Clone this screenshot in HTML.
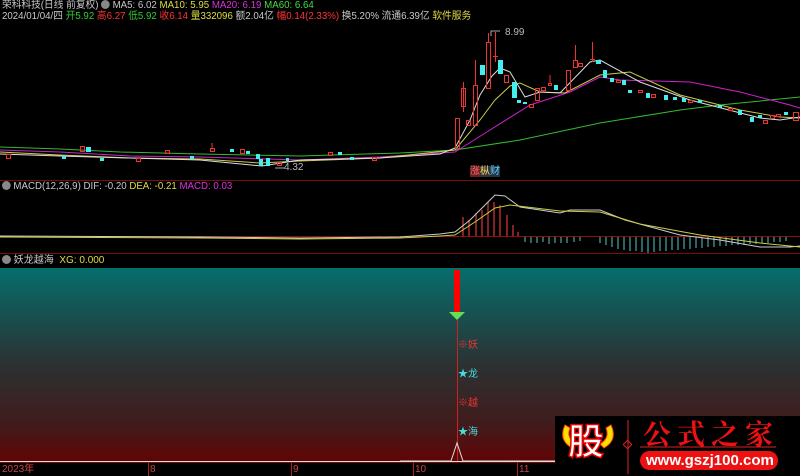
<!DOCTYPE html>
<html><head><meta charset="utf-8"><style>
body{margin:0;width:800px;height:476px;overflow:hidden;background:#000;font-family:"Liberation Sans","Noto Sans CJK SC",sans-serif;position:relative}
.t{position:absolute;font-size:10px;white-space:nowrap;color:#c8c8c8;line-height:12px}
.h{transform:scaleX(0.97);transform-origin:0 0}
.g{color:#3c3}.r{color:#f33}.y{color:#dd4}.m{color:#d3d}.gr{color:#4d4}
</style></head><body>
<svg width="800" height="476" style="position:absolute;left:0;top:0">
<defs><linearGradient id="bg" x1="0" y1="0" x2="0" y2="1">
<stop offset="0" stop-color="#056e6c"/><stop offset="0.5" stop-color="#2c3132"/><stop offset="0.8" stop-color="#401c1c"/><stop offset="1" stop-color="#620404"/></linearGradient></defs>
<line x1="0" y1="180.5" x2="800" y2="180.5" stroke="#7a0c0c"/>
<line x1="0" y1="253.5" x2="800" y2="253.5" stroke="#7a0c0c"/>
<rect x="0" y="268" width="800" height="194" fill="url(#bg)"/>
<line x1="0" y1="461.5" x2="800" y2="461.5" stroke="#ddd"/>
<line x1="0" y1="462.5" x2="800" y2="462.5" stroke="#7a0c0c"/>
<polyline fill="none" stroke="#3b3" stroke-width="1" points="0,147 60,149 120,152 200,154 300,156 400,153 455,150 520,140 600,123 680,110 720,105 800,97"/>
<polyline fill="none" stroke="#c2c" stroke-width="1" points="0,150 60,152 130,156 200,157 300,160 380,157 455,152 490,130 530,105 570,92 600,77 620,80 690,82 740,92 790,105 800,108"/>
<polyline fill="none" stroke="#cc4" stroke-width="1" points="0,152 60,155 130,158 200,159 260,163 300,161 380,158 455,150 480,120 495,100 510,86 520,83 540,92 565,93 600,75 630,72 680,95 740,110 780,117 800,118"/>
<polyline fill="none" stroke="#ddd" stroke-width="1" points="0,154 60,156 130,158 200,160 262,166 300,160 380,158 440,154 455,148 470,120 480,95 492,76 500,68 510,72 525,97 540,92 560,93 590,62 600,60 640,82 690,100 760,118 780,120 800,117"/>
<g stroke="#e33" fill="none">
<rect x="455.5" y="118.5" width="4" height="30"/><rect x="461.5" y="88.5" width="4" height="18"/><line x1="463.5" y1="82" x2="463.5" y2="112"/>
<rect x="466.5" y="120.5" width="4" height="5"/><rect x="473.5" y="85.5" width="4" height="40"/><line x1="475.5" y1="60" x2="475.5" y2="85"/>
<rect x="486.5" y="42.5" width="4" height="46"/><line x1="488.5" y1="33" x2="488.5" y2="42"/>
<line x1="495.5" y1="32" x2="495.5" y2="62"/><line x1="493" y1="56.5" x2="498" y2="56.5"/>
<rect x="504.5" y="75.5" width="4" height="7"/><rect x="529.5" y="104.5" width="4" height="3"/>
<rect x="535.5" y="88.5" width="4" height="12"/><rect x="541.5" y="87.5" width="4" height="3"/><rect x="548.5" y="83.5" width="3" height="2"/><line x1="550" y1="75" x2="550" y2="83"/>
<rect x="566.5" y="70.5" width="4" height="20"/><rect x="573.5" y="60.5" width="4" height="7"/><line x1="575.5" y1="45" x2="575.5" y2="60"/>
<rect x="578.5" y="63.5" width="4" height="3"/><line x1="592.5" y1="42" x2="592.5" y2="62"/><line x1="590" y1="59.5" x2="595" y2="59.5"/>
<rect x="616.5" y="80.5" width="4" height="2"/><rect x="638.5" y="90.5" width="4" height="2"/><rect x="651.5" y="94.5" width="4" height="3"/>
<rect x="688.5" y="100.5" width="4" height="2"/><rect x="728.5" y="108.5" width="4" height="2"/><rect x="763.5" y="120.5" width="4" height="3"/>
<rect x="770.5" y="115.5" width="4" height="3"/><rect x="776.5" y="114.5" width="4" height="2"/><rect x="793.5" y="112.5" width="5" height="8"/>
<rect x="80.5" y="146.5" width="4" height="5"/><rect x="6.5" y="154.5" width="4" height="4"/><rect x="136.5" y="158.5" width="4" height="3"/>
<rect x="165.5" y="150.5" width="4" height="3"/><rect x="210.5" y="148.5" width="4" height="3"/><line x1="212" y1="143" x2="212" y2="149"/>
<rect x="240.5" y="149.5" width="4" height="4"/><rect x="277.5" y="162.5" width="4" height="3"/><rect x="328.5" y="152.5" width="4" height="3"/><rect x="372.5" y="157.5" width="4" height="3"/>
</g>
<g fill="#4ee">
<rect x="480" y="65" width="5" height="10"/><rect x="498" y="60" width="5" height="14"/><rect x="512" y="82" width="5" height="16"/>
<rect x="517" y="100" width="4" height="3"/><rect x="523" y="102" width="4" height="2"/><rect x="554" y="85" width="4" height="5"/>
<rect x="596" y="60" width="5" height="4"/><rect x="603" y="70" width="4" height="8"/><rect x="610" y="78" width="4" height="4"/>
<rect x="622" y="80" width="4" height="5"/><rect x="628" y="90" width="4" height="3"/><rect x="646" y="93" width="4" height="5"/>
<rect x="664" y="95" width="4" height="5"/><rect x="673" y="97" width="4" height="3"/><rect x="682" y="98" width="4" height="4"/>
<rect x="698" y="100" width="4" height="3"/><rect x="718" y="105" width="4" height="3"/><rect x="738" y="110" width="4" height="5"/>
<rect x="750" y="117" width="4" height="5"/><rect x="758" y="115" width="4" height="3"/><rect x="784" y="112" width="4" height="3"/>
<rect x="86" y="147" width="5" height="5"/><rect x="62" y="155" width="4" height="4"/><rect x="100" y="158" width="4" height="3"/>
<rect x="190" y="156" width="4" height="3"/><rect x="230" y="149" width="4" height="3"/><rect x="246" y="151" width="4" height="3"/>
<rect x="256" y="154" width="4" height="5"/><rect x="259" y="159" width="4" height="7"/><rect x="266" y="158" width="4" height="8"/>
<rect x="286" y="158" width="3" height="3"/><rect x="338" y="152" width="4" height="3"/><rect x="350" y="157" width="4" height="3"/>
</g>
<polyline fill="none" stroke="#aaa" points="491,36 491,31 500,31"/>
<polyline fill="none" stroke="#aaa" points="285,168 275,168"/>
<line x1="0" y1="236.5" x2="800" y2="236.5" stroke="#8a1010"/>
<g stroke="#c33" stroke-width="1.3">
<line x1="463" y1="236" x2="463" y2="217"/><line x1="469" y1="236" x2="469" y2="220"/><line x1="476" y1="236" x2="476" y2="213"/><line x1="482" y1="236" x2="482" y2="210"/><line x1="488" y1="236" x2="488" y2="202"/><line x1="494" y1="236" x2="494" y2="202"/><line x1="500" y1="236" x2="500" y2="205"/><line x1="507" y1="236" x2="507" y2="215"/><line x1="513" y1="236" x2="513" y2="225"/><line x1="518" y1="236" x2="518" y2="232"/>
</g>
<g stroke="#5cc" stroke-width="1">
<path d="M525 237v5M531 237v6M537 237v6M543 237v5M549 237v7M555 237v6M561 237v6M567 237v6M574 237v5M580 237v4M600 237v6M606 237v8M612 237v10M618 237v12M624 237v13M630 237v14M636 237v14M642 237v15M648 237v16M654 237v15M660 237v14M666 237v14M672 237v13M678 237v13M684 237v12M690 237v12M696 237v11M702 237v11M708 237v10M714 237v10M720 237v9M726 237v9M732 237v8M738 237v8M744 237v8M750 237v7M756 237v7M762 237v6M768 237v6M774 237v5M780 237v5M786 237v4"/>
</g>
<polyline fill="none" stroke="#ccc" points="0,236 200,237 300,238 400,237 440,234 455,232 470,220 485,205 495,195 505,196 520,207 560,213 570,210 600,210 625,220 680,235 720,240 760,247 790,247 800,246"/>
<polyline fill="none" stroke="#cc4" points="0,237 200,238 300,239 400,238 440,236 455,235 475,222 495,208 510,205 560,211 600,212 640,224 700,235 760,243 790,246 800,247"/>
<rect x="454" y="270" width="6" height="42" fill="#f00"/>
<polygon points="449,312 465,312 457,320" fill="#6d5"/>
<line x1="457.5" y1="320" x2="457.5" y2="461" stroke="#c22"/>
<polyline fill="none" stroke="#ddd" points="400,461 451,461 457,443 463,461 555,461"/>
<g stroke="#a22"><line x1="148.5" y1="463" x2="148.5" y2="476"/><line x1="291.5" y1="463" x2="291.5" y2="476"/><line x1="413.5" y1="463" x2="413.5" y2="476"/><line x1="517.5" y1="463" x2="517.5" y2="476"/></g>
<rect x="555" y="416" width="245" height="60" fill="#000"/>
<path d="M565 425 Q558 440 572 448 L576 444 Q566 438 570 428Z" fill="#fd0" stroke="#f40"/>
<path d="M611 425 Q618 440 604 448 L600 444 Q610 438 606 428Z" fill="#fd0" stroke="#f40"/>
<line x1="628" y1="420" x2="628" y2="474" stroke="#d22"/>
<rect x="624.5" y="441.5" width="6" height="6" fill="none" stroke="#d22" transform="rotate(45 627.5 444.5)"/>
<line x1="640" y1="447" x2="776" y2="447" stroke="#d22"/>
<rect x="640" y="451" width="138" height="19" rx="9.5" fill="#e11"/>
</svg>
<div class="t h" style="left:2px;top:0"><span>荣科科技(日线 前复权)</span> <span style="display:inline-block;width:9px;height:9px;border-radius:50%;background:#888;vertical-align:-1px"></span> MA5: 6.02 <span class="y">MA10: 5.95</span> <span class="m">MA20: 6.19</span> <span class="gr">MA60: 6.64</span></div>
<div class="t h" style="left:2px;top:11px">2024/01/04/四 <span class="g">开5.92</span> <span class="r">高6.27</span> <span class="g">低5.92</span> <span class="r">收6.14</span> <span class="y">量332096</span> 额2.04亿 <span class="r">幅0.14(2.33%)</span> 换5.20% 流通6.39亿 <span class="y">软件服务</span></div>
<div class="t" style="left:505px;top:27px;color:#bbb">8.99</div>
<div class="t" style="left:284px;top:162px;color:#bbb">4.32</div>
<div class="t" style="left:470px;top:166px;font-size:10px"><span style="background:#622;color:#f66">涨</span><span style="background:#333;color:#ec6">枞</span><span style="background:#234;color:#6cf">财</span></div>
<div class="t h" style="left:2px;top:181px"><span style="display:inline-block;width:9px;height:9px;border-radius:50%;background:#888;vertical-align:-1px"></span> MACD(12,26,9) DIF: -0.20 <span class="y">DEA: -0.21</span> <span class="m">MACD: 0.03</span></div>
<div class="t" style="left:2px;top:255px"><span style="display:inline-block;width:9px;height:9px;border-radius:50%;background:#888;vertical-align:-1px"></span> 妖龙越海 &nbsp;<span class="y">XG: 0.000</span></div>
<div class="t" style="left:458px;top:340px;color:#e33;font-size:10px">※妖</div>
<div class="t" style="left:458px;top:369px;color:#4dd;font-size:10px">★龙</div>
<div class="t" style="left:458px;top:398px;color:#e33;font-size:10px">※越</div>
<div class="t" style="left:458px;top:427px;color:#4dd;font-size:10px">★海</div>
<div class="t" style="left:2px;top:464px;color:#c44;font-size:10px">2023年</div>
<div class="t" style="left:150px;top:464px;color:#c44;font-size:10px">8</div>
<div class="t" style="left:293px;top:464px;color:#c44;font-size:10px">9</div>
<div class="t" style="left:415px;top:464px;color:#c44;font-size:10px">10</div>
<div class="t" style="left:519px;top:464px;color:#c44;font-size:10px">11</div>
<div class="t" style="left:568px;top:420px;font-size:36px;line-height:44px;color:#fff;font-weight:bold;-webkit-text-stroke:1.5px #e00">股</div>
<div class="t" style="left:643px;top:418px;font-size:28px;line-height:30px;color:#e11;font-weight:bold;font-family:'Noto Serif CJK SC',serif;letter-spacing:6px">公式之家</div>
<div class="t" style="left:646px;top:453px;font-size:15px;line-height:16px;color:#fff;font-weight:bold">www.gszj100.com</div>
</body></html>
